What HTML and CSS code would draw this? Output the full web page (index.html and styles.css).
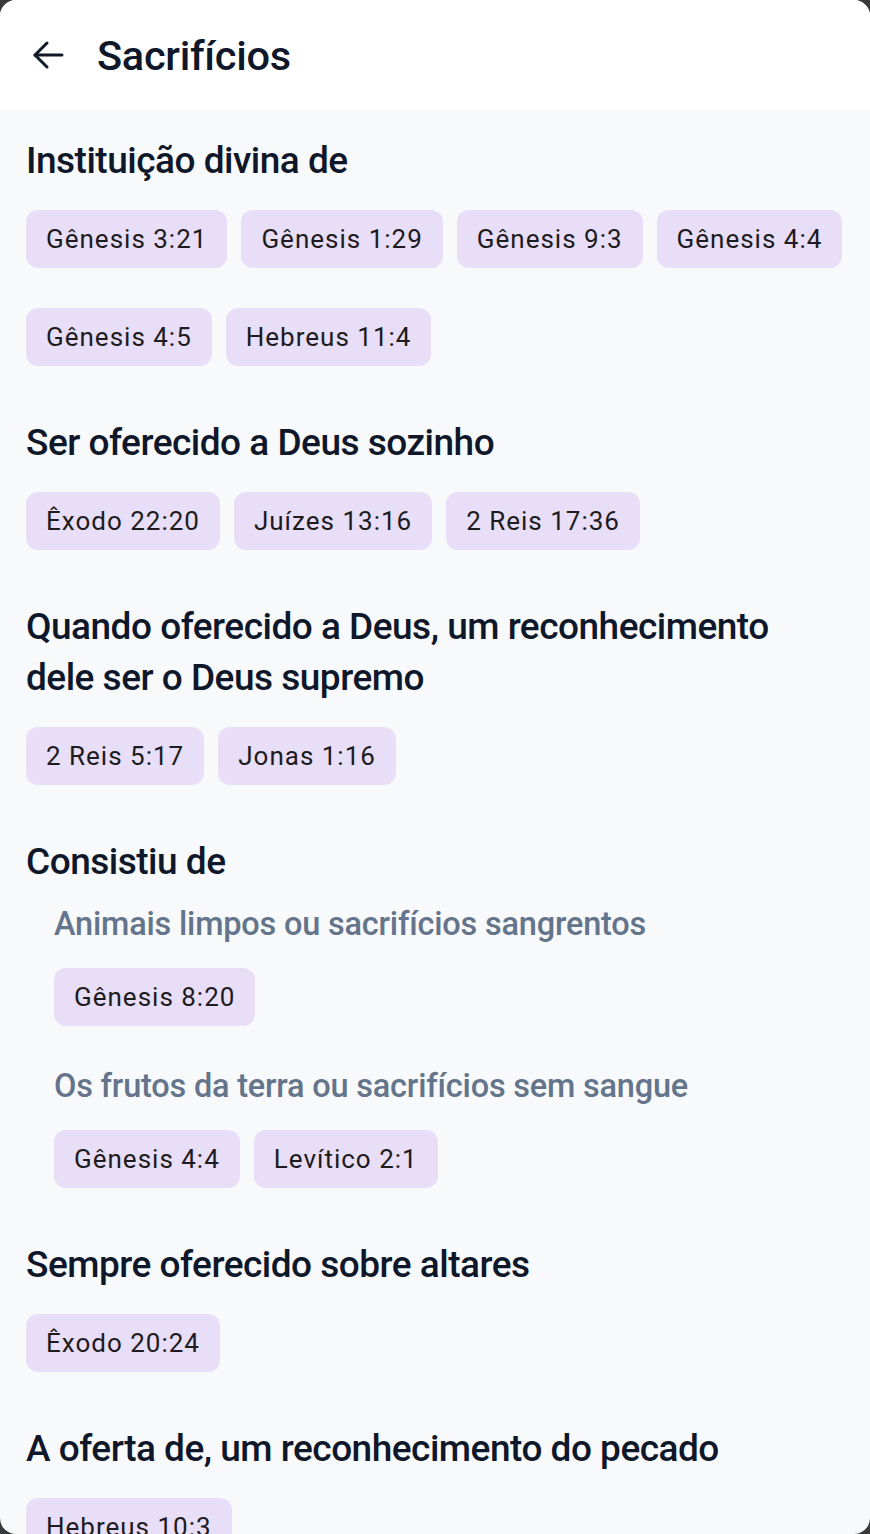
FILE: index.html
```html
<!DOCTYPE html>
<html lang="pt">
<head>
    <meta charset="UTF-8">
    <meta name="viewport" content="width=device-width, initial-scale=1.0">
    <title>Sacrifícios</title>
    <link rel="stylesheet" href="styles.css">
</head>
<body>
    <div class="screen">
        <!-- Top Bar -->
        <header class="top-bar">
            <a href="#" class="back-button" aria-label="Voltar">
                <svg width="32" height="32" viewBox="0 0 32 32" fill="none" stroke="currentColor" stroke-width="3" stroke-linecap="round" stroke-linejoin="round">
                    <path d="M30 16H3"/>
                    <path d="M15 4L3 16l12 12"/>
                </svg>
            </a>
            <h1>Sacrifícios</h1>
        </header>

        <main class="content">
            <section class="topic">
                <h2 class="topic-title">Instituição divina de</h2>
                <div class="refs">
                    <a href="#" class="ref">Gênesis 3:21</a>
                    <a href="#" class="ref">Gênesis 1:29</a>
                    <a href="#" class="ref">Gênesis 9:3</a>
                    <a href="#" class="ref">Gênesis 4:4</a>
                    <a href="#" class="ref">Gênesis 4:5</a>
                    <a href="#" class="ref">Hebreus 11:4</a>
                </div>
            </section>

            <section class="topic">
                <h2 class="topic-title">Ser oferecido a Deus sozinho</h2>
                <div class="refs">
                    <a href="#" class="ref">Êxodo 22:20</a>
                    <a href="#" class="ref">Juízes 13:16</a>
                    <a href="#" class="ref">2 Reis 17:36</a>
                </div>
            </section>

            <section class="topic">
                <h2 class="topic-title">Quando oferecido a Deus, um reconhecimento dele ser o Deus supremo</h2>
                <div class="refs">
                    <a href="#" class="ref">2 Reis 5:17</a>
                    <a href="#" class="ref">Jonas 1:16</a>
                </div>
            </section>

            <section class="topic">
                <h2 class="topic-title tight">Consistiu de</h2>
                <div class="subtopic">
                    <h3>Animais limpos ou sacrifícios sangrentos</h3>
                    <div class="refs">
                        <a href="#" class="ref">Gênesis 8:20</a>
                    </div>
                </div>
                <div class="subtopic">
                    <h3>Os frutos da terra ou sacrifícios sem sangue</h3>
                    <div class="refs">
                        <a href="#" class="ref">Gênesis 4:4</a>
                        <a href="#" class="ref">Levítico 2:1</a>
                    </div>
                </div>
            </section>

            <section class="topic">
                <h2 class="topic-title">Sempre oferecido sobre altares</h2>
                <div class="refs">
                    <a href="#" class="ref">Êxodo 20:24</a>
                </div>
            </section>

            <section class="topic">
                <h2 class="topic-title">A oferta de, um reconhecimento do pecado</h2>
                <div class="refs">
                    <a href="#" class="ref">Hebreus 10:3</a>
                </div>
            </section>
        </main>
    </div>
</body>
</html>
```

FILE: styles.css
```css
/* General Reset */
* {
    margin: 0;
    padding: 0;
    box-sizing: border-box;
}

html, body {
    height: 100%;
}

body {
    background-color: #3a3a3a;
    font-family: 'Roboto', 'Noto Sans', sans-serif;
}

/* Phone screen */
.screen {
    height: 100vh;
    overflow: hidden;
    border-radius: 16px;
    background-color: #f8f9fb;
    display: flex;
    flex-direction: column;
}

/* Top Bar */
.top-bar {
    flex-shrink: 0;
    height: 110px;
    background-color: #fff;
    display: flex;
    align-items: center;
    padding-left: 32px;
}

.back-button {
    display: flex;
    color: #111827;
    margin-right: 33px;
}

.top-bar h1 {
    font-size: 41.5px;
    font-weight: 500;
    color: #0f172a;
    letter-spacing: -0.3px;
}

/* Content */
.content {
    padding: 25px 18px 0 26px;
}

.topic {
    margin-bottom: 51px;
}

.topic-title {
    font-size: 37px;
    line-height: 51px;
    font-weight: 500;
    color: #0f172a;
    letter-spacing: -0.5px;
    padding-right: 30px;
    margin-bottom: 24px;
}

.topic-title.tight {
    margin-bottom: 15px;
}

.subtopic {
    padding-left: 28px;
}

.subtopic + .subtopic {
    margin-top: 38px;
}

.subtopic h3 {
    font-size: 32.5px;
    line-height: 44px;
    font-weight: 500;
    color: #64748b;
    letter-spacing: -0.2px;
    margin-bottom: 22px;
}

/* Reference chips */
.refs {
    display: flex;
    flex-wrap: wrap;
    column-gap: 14px;
    row-gap: 40px;
}

.ref {
    display: inline-flex;
    align-items: center;
    height: 58px;
    padding: 0 20px;
    border-radius: 12px;
    background-color: #e8def8;
    color: #1d1b20;
    font-size: 26px;
    letter-spacing: 1px;
    text-decoration: none;
}
```
